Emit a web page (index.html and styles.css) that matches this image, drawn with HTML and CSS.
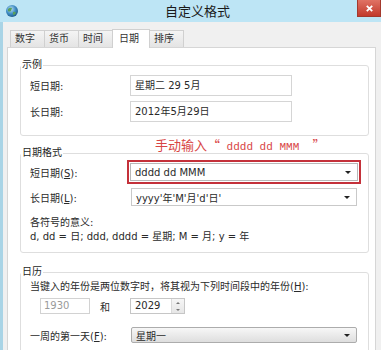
FILE: index.html
```html
<!DOCTYPE html>
<html lang="zh-CN">
<head>
    <meta charset="UTF-8">
    <title>自定义格式</title>
    <link rel="stylesheet" href="styles.css">
</head>
<body>

<!-- Title Bar -->
<div class="titlebar">
    <svg class="app-icon" viewBox="0 0 14 14">
        <defs>
            <radialGradient id="globe" cx="40%" cy="35%" r="65%">
                <stop offset="0" stop-color="#bfe3f5"/>
                <stop offset="0.6" stop-color="#3f8cc4"/>
                <stop offset="1" stop-color="#235f8f"/>
            </radialGradient>
        </defs>
        <circle cx="7" cy="7" r="6" fill="url(#globe)"/>
        <path d="M3 5 Q5 3 7 4 L6 7 Q4 8 3 7 Z" fill="#5aa05a"/>
        <path d="M8 8 Q10 7 11 9 Q10 11 8 11 Z" fill="#5aa05a"/>
    </svg>
    <div class="title">自定义格式</div>
    <div class="close">
        <svg viewBox="0 0 10 10" width="9" height="9">
            <path d="M2 2 L8 8 M8 2 L2 8" stroke="#fff" stroke-width="2"/>
        </svg>
    </div>
</div>

<div class="frame">
    <!-- Tabs -->
    <div class="tabs">
        <div class="tab">数字</div>
        <div class="tab">货币</div>
        <div class="tab">时间</div>
        <div class="tab active">日期</div>
        <div class="tab">排序</div>
    </div>

    <div class="panel">
        <!-- Sample -->
        <fieldset class="group g-sample">
            <legend>示例</legend>
            <div class="row">
                <span class="label">短日期:</span>
                <div class="field">星期二 29 5月</div>
            </div>
            <div class="row">
                <span class="label">长日期:</span>
                <div class="field">2012年5月29日</div>
            </div>
        </fieldset>

        <div class="note">手动输入“<span class="mono">&nbsp;dddd dd MMM&nbsp;&nbsp;</span>”</div>

        <!-- Date formats -->
        <fieldset class="group g-format">
            <legend>日期格式</legend>
            <div class="row">
                <span class="label">短日期(<u>S</u>):</span>
                <div class="highlight">
                    <div class="combo"><span class="combo-text">dddd dd MMM</span><span class="arrow"></span></div>
                </div>
            </div>
            <div class="row row-long">
                <span class="label">长日期(<u>L</u>):</span>
                <div class="combo wide"><span class="combo-text">yyyy'年'M'月'd'日'</span><span class="arrow"></span></div>
            </div>
            <div class="meaning">
                <div>各符号的意义:</div>
                <div>d, dd = 日; ddd, dddd = 星期; M = 月; y = 年</div>
            </div>
        </fieldset>

        <!-- Calendar -->
        <fieldset class="group g-calendar">
            <legend>日历</legend>
            <div class="hint">当键入的年份是两位数字时，将其视为下列时间段中的年份(<u>H</u>):</div>
            <div class="row row-years">
                <div class="year-from">1930</div>
                <span class="and">和</span>
                <div class="spin">
                    <span class="spin-value">2029</span>
                    <div class="spin-btns">
                        <span class="up"></span>
                        <span class="down"></span>
                    </div>
                </div>
            </div>
            <div class="row row-week">
                <span class="label week-label">一周的第一天(<u>F</u>):</span>
                <div class="combo button wide"><span class="combo-text">星期一</span><span class="arrow"></span></div>
            </div>
        </fieldset>
    </div>
</div>

</body>
</html>
```

FILE: styles.css
```css
* {
    box-sizing: border-box;
}

html, body {
    margin: 0;
    width: 381px;
    height: 350px;
    overflow: hidden;
}

body {
    background: #f0f0f0;
    font-family: "DejaVu Sans", "Noto Sans CJK SC", sans-serif;
    font-size: 10px;
    color: #2a2a2a;
}

/* Title Bar */
.titlebar {
    height: 22px;
    display: flex;
    align-items: flex-start;
    background: #bde5f5;
}

.app-icon {
    width: 14px;
    height: 14px;
    margin: 4px 0 0 5px;
}

.title {
    margin-left: 146px;
    font-family: "Noto Sans CJK SC", sans-serif;
    font-size: 13px;
    line-height: 22px;
    color: #1a1a1a;
}

.close {
    margin-left: auto;
    width: 24px;
    height: 17px;
    display: flex;
    align-items: center;
    justify-content: center;
    background: linear-gradient(#e07264, #c23a2c);
    border: 1px solid #a3392d;
    border-top: none;
}

/* Window body */
.frame {
    height: 328px;
    padding: 7px 5px 0 4px;
    border-left: 3px solid #a9d4e6;
}

/* Tabs */
.tabs {
    display: flex;
    align-items: flex-end;
    height: 18px;
    margin-left: 3px;
}

.tab {
    width: 35px;
    height: 17px;
    padding-left: 4px;
    margin-right: -1px;
    line-height: 16px;
    border: 1px solid #d0d0d0;
    border-bottom: none;
    background: linear-gradient(#f4f4f4, #e4e4e4);
    color: #333;
}

.tab.active {
    position: relative;
    z-index: 1;
    width: 38px;
    height: 19px;
    margin-bottom: -1px;
    padding-left: 6px;
    background: #fff;
    line-height: 17px;
}

.panel {
    height: 310px;
    padding: 10px 6px 0 12px;
    background: #fff;
    border: 1px solid #d6d6d6;
}

/* Group boxes */
.group {
    margin: 0;
    min-width: 0;
    padding: 3px 0 13px 0;
    border: 1px solid #dedede;
    border-radius: 3px;
}

.group legend {
    padding: 0 1px;
    line-height: 14px;
    color: #1e1e1e;
}

.row {
    display: flex;
    align-items: center;
    padding-left: 9px;
}

.row + .row {
    margin-top: 5px;
}

.label {
    flex: none;
    width: 100px;
}

.field {
    width: 162px;
    height: 21px;
    padding-left: 4px;
    line-height: 19px;
    border: 1px solid #d5d5d5;
}

/* Red hint */
.note {
    height: 10px;
    padding-left: 135px;
    font-family: "Noto Sans CJK SC", sans-serif;
    font-size: 13px;
    line-height: 18px;
    color: #d84545;
    white-space: nowrap;
}

.mono {
    font-family: "Liberation Mono", monospace;
    font-size: 11px;
}

/* Date format group */
.g-format {
    margin-top: 0;
    padding-top: 0;
    padding-bottom: 8px;
}

.highlight {
    width: 234px;
    height: 24px;
    margin-left: -3px;
    padding: 1px;
    border: 2px solid #c4313a;
}

.combo {
    display: flex;
    align-items: center;
    height: 18px;
    padding: 0 6px 0 4px;
    border: 1px solid #c9c9c9;
    background: #fff;
}

.highlight .combo {
    height: 100%;
    border-color: #b8b8b8;
}

.combo.wide {
    width: 226px;
    margin-left: 1px;
}

.combo-text {
    flex: 1;
    white-space: nowrap;
}

.arrow {
    width: 0;
    height: 0;
    border-left: 3px solid transparent;
    border-right: 3px solid transparent;
    border-top: 3px solid #222;
}

.g-format .row-long {
    margin-top: 4px;
}

.meaning {
    margin-top: 10px;
    padding-left: 9px;
    line-height: 14px;
    white-space: nowrap;
}

/* Calendar group */
.g-calendar {
    margin-top: 12px;
    padding-top: 1px;
}

.hint {
    padding-left: 9px;
    line-height: 14px;
    white-space: nowrap;
}

.row-years {
    margin-top: 4px;
}

.year-from {
    width: 50px;
    height: 16px;
    margin-left: 10px;
    padding-left: 3px;
    line-height: 14px;
    border: 1px solid #d2d2d2;
    color: #9a9a9a;
}

.and {
    width: 10px;
    margin-left: 10px;
}

.spin {
    display: flex;
    width: 55px;
    height: 16px;
    margin-left: 20px;
    border: 1px solid #c6c6c6;
}

.spin-value {
    flex: 1;
    padding-left: 4px;
    line-height: 14px;
}

.spin-btns {
    display: flex;
    flex-direction: column;
    width: 13px;
    border-left: 1px solid #dadada;
    background: linear-gradient(#f6f6f6, #e6e6e6);
}

.spin-btns span {
    flex: 1;
    display: flex;
    align-items: center;
    justify-content: center;
}

.spin-btns .up::before {
    content: "";
    border-left: 2px solid transparent;
    border-right: 2px solid transparent;
    border-bottom: 2px solid #777;
}

.spin-btns .down::before {
    content: "";
    border-left: 2px solid transparent;
    border-right: 2px solid transparent;
    border-top: 2px solid #777;
}

.g-calendar .row-week {
    margin-top: 13px;
}

.week-label {
    width: 100px;
}

.combo.button {
    height: 16px;
    border-color: #acacac;
    border-radius: 2px;
    background: linear-gradient(#f7f7f7, #dedede);
}
```
